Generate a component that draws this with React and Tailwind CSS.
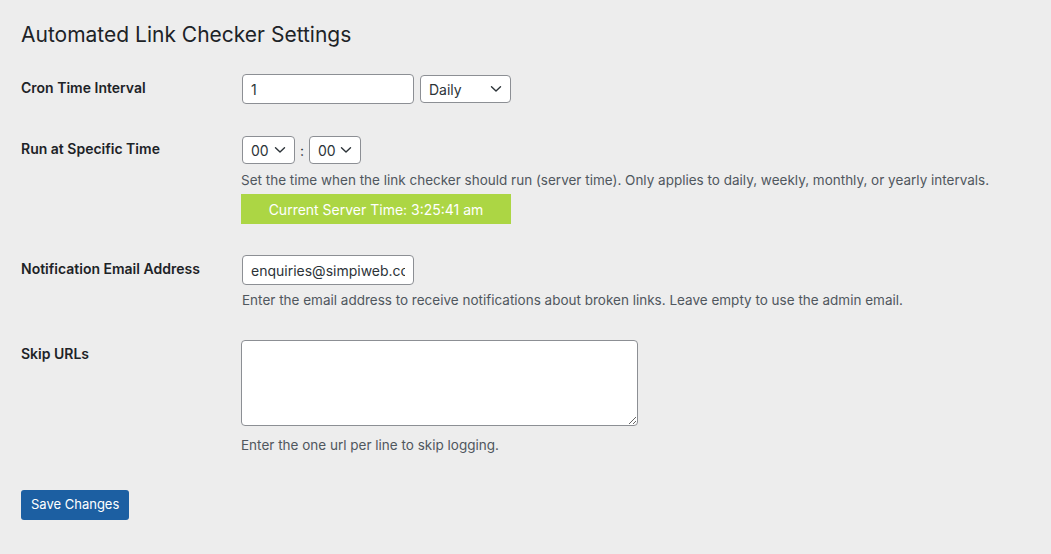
import React, { useState } from 'react';

const Chevron = () => (
    <svg width="12" height="8" viewBox="0 0 12 8" fill="none" className="shrink-0">
        <path d="M1.5 1.8 L6 6 L10.5 1.8" stroke="#2c3338" strokeWidth="1.4" strokeLinecap="round" strokeLinejoin="round" />
    </svg>
);

const SelectBox = ({ value, className }) => (
    <div className={`flex items-center justify-between h-[28px] bg-white border border-[#8c8f94] rounded-[4px] pl-[8px] pr-[8px] text-[14px] text-[#2c3338] ${className}`}>
        <span>{value}</span>
        <Chevron />
    </div>
);

const Row = ({ label, labelTop, children }) => (
    <div className="flex">
        <div className="w-[221px] shrink-0 text-[14px] font-semibold text-[#1d2327] leading-[18px]" style={{ paddingTop: labelTop }}>
            {label}
        </div>
        <div className="flex-1">{children}</div>
    </div>
);

const App = () => {
    const [interval, setInterval] = useState('1');
    const [email, setEmail] = useState('enquiries@simpiweb.com');

    return (
        <div className="min-h-[554px] bg-[#ededed] text-[#3c434a]" style={{ fontFamily: 'Inter, "Noto Sans", sans-serif' }}>
            <div className="pl-[21px] pt-[20px]">
                <h1 className="text-[21px] leading-[30px] font-normal text-[#1d2327]">Automated Link Checker Settings</h1>

                <div className="mt-[9px]">
                    {/* Cron interval */}
                    <Row label="Cron Time Interval" labelTop="20px">
                        <div className="flex items-center gap-[6px] pt-[15px] pb-[16px]">
                            <input
                                value={interval}
                                onChange={(e) => setInterval(e.target.value)}
                                className="w-[172px] h-[30px] bg-white border border-[#8c8f94] rounded-[4px] px-[8px] text-[14px] text-[#2c3338] outline-none"
                            />
                            <SelectBox value="Daily" className="w-[91px]" />
                        </div>
                    </Row>

                    {/* Specific time */}
                    <Row label="Run at Specific Time" labelTop="20px">
                        <div className="pt-[16px] pb-[16px]">
                            <div className="flex items-center">
                                <SelectBox value="00" className="w-[53px]" />
                                <span className="w-[14px] text-center text-[14px] text-[#2c3338]">:</span>
                                <SelectBox value="00" className="w-[52px]" />
                            </div>
                            <p className="mt-[7px] text-[13.5px] leading-[18px] text-[#50575e] -ml-[1px]">
                                Set the time when the link checker should run (server time). Only applies to daily, weekly, monthly, or yearly intervals.
                            </p>
                            <div className="mt-[5px] -ml-[1px] w-[270px] h-[30px] bg-[#acd644] text-white text-[14px] flex items-center justify-center">
                                Current Server Time: 3:25:41 am
                            </div>
                        </div>
                    </Row>

                    {/* Email */}
                    <Row label="Notification Email Address" labelTop="20px">
                        <div className="pt-[15px] pb-[16px]">
                            <input
                                value={email}
                                onChange={(e) => setEmail(e.target.value)}
                                className="w-[172px] h-[30px] bg-white border border-[#8c8f94] rounded-[4px] px-[8px] text-[14px] text-[#2c3338] outline-none"
                            />
                            <p className="mt-[6px] text-[13.5px] leading-[18px] text-[#50575e]">
                                Enter the email address to receive notifications about broken links. Leave empty to use the admin email.
                            </p>
                        </div>
                    </Row>

                    {/* Skip URLs */}
                    <Row label="Skip URLs" labelTop="20px">
                        <div className="pt-[15px] pb-[15px]">
                            <textarea className="block -ml-[1px] w-[397px] h-[86px] bg-white border border-[#8c8f94] rounded-[4px] px-[8px] py-[4px] text-[14px] outline-none" />
                            <p className="mt-[10px] text-[13.5px] leading-[18px] text-[#50575e] -ml-[1px]">
                                Enter the one url per line to skip logging.
                            </p>
                        </div>
                    </Row>
                </div>

                <button className="mt-[21px] h-[30px] px-[10px] bg-[#1c5fa2] text-white text-[13px] rounded-[3px]">
                    Save Changes
                </button>
            </div>
        </div>
    );
};

export default App;
